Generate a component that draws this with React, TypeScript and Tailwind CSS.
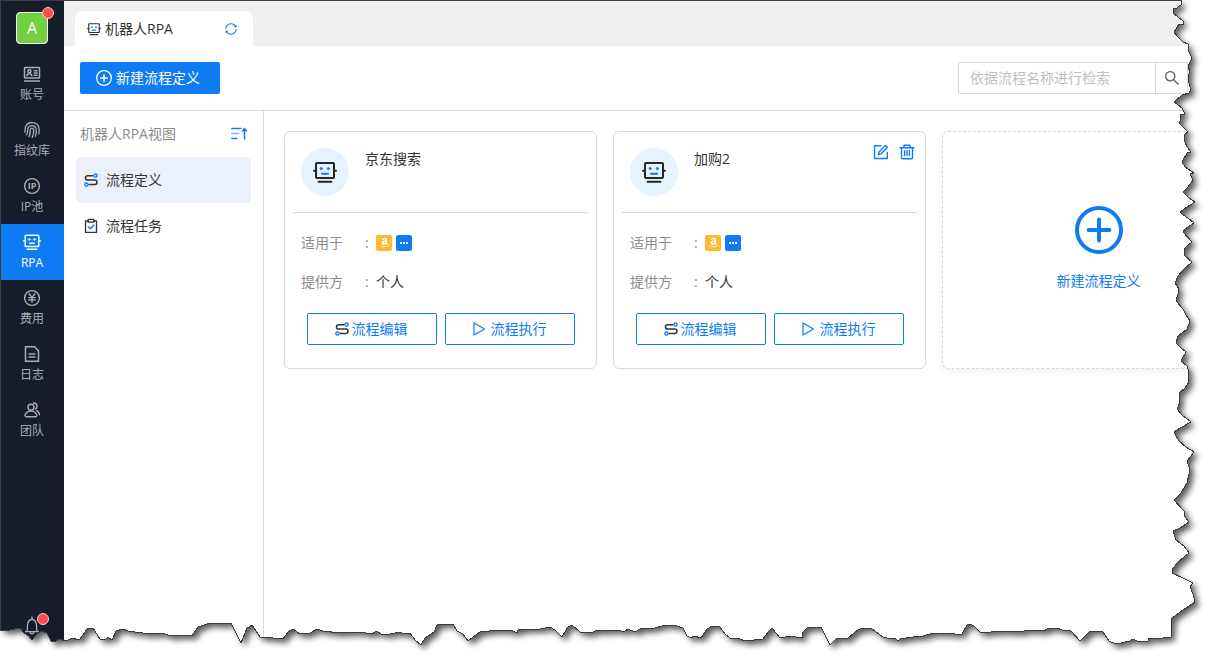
import type { ReactNode } from "react";
import { AiOutlineSearch, AiOutlineSync } from "react-icons/ai";
import { FaAmazon } from "react-icons/fa";

type IconProps = { className?: string };

function Svg({ className = "size-4", box = 16, width = 1.3, children }: { className?: string; box?: number; width?: number; children: ReactNode }) {
  return (
    <svg
      className={className}
      viewBox={`0 0 ${box} ${box}`}
      fill="none"
      stroke="currentColor"
      strokeWidth={width}
      strokeLinecap="round"
      strokeLinejoin="round"
      aria-hidden="true"
    >
      {children}
    </svg>
  );
}

// robot head: dark frame, face in its own colour
function RobotIcon({ className, face = "#0f7cf4" }: IconProps & { face?: string }) {
  return (
    <Svg className={className} box={24} width={2}>
      <rect x="3" y="3" width="18" height="15" rx="1" />
      <path d="M1 10.8h2M21 10.8h2M5.5 21.7h13" />
      <g stroke={face}>
        <path d="M9 13.8h6" />
        <circle cx="8.2" cy="8.6" r="1.1" fill={face} strokeWidth="1" />
        <circle cx="15.3" cy="8.6" r="1.1" fill={face} strokeWidth="1" />
      </g>
    </Svg>
  );
}

function FlowIcon({ className }: IconProps) {
  return (
    <Svg className={className} width={1.5}>
      <path d="M10 3.8H4.6a2.1 2.1 0 0 0 0 4.2h7.2a2.2 2.2 0 0 1 0 4.4H6" stroke="#333" />
      <circle cx="12.5" cy="3.6" r="1.6" stroke="#0f7cf4" strokeWidth="1.3" />
      <circle cx="3.4" cy="12.6" r="1.6" stroke="#0f7cf4" strokeWidth="1.3" />
    </Svg>
  );
}

function TaskIcon({ className }: IconProps) {
  return (
    <Svg className={className}>
      <path d="M5 3H2.5v11.4h11V3H11" stroke="#333" />
      <rect x="5.2" y="1.4" width="5.6" height="2.8" stroke="#333" />
      <path d="M5.3 8.8l2 2 3.6-3.8" stroke="#0f7cf4" strokeWidth="1.5" />
    </Svg>
  );
}

function PlusCircle({ className }: IconProps) {
  return (
    <Svg className={className} box={24} width={2}>
      <circle cx="12" cy="12" r="11" />
      <path d="M12 6.8v10.4M6.8 12h10.4" />
    </Svg>
  );
}

function AccountIcon() {
  return (
    <Svg className="size-[18px]" box={18} width={1.5}>
      <rect x="1.5" y="2.5" width="15" height="10.5" rx="0.6" />
      <path d="M1.5 16h15M11.2 5.7h2.8M11.2 8h2.8M11.2 10.3h2.8" />
      <circle cx="6.4" cy="6.2" r="1.5" />
      <path d="M4 10.8c.2-2.6 4.6-2.6 4.8 0" />
    </Svg>
  );
}

function FingerIcon() {
  return (
    <Svg className="size-[18px]" box={18} width={1.3}>
      <path d="M1.8 11.2C2.6 9.6 1.6 7.8 2.6 5.4 5 .2 13.4.2 15.6 5.600c.8 2.200.6 4.800.2 7.200" />
      <path d="M3.6 13.8c1.7-2.5.6-4.6 1.3-6.6 1.4-3.6 7-3.4 8.1.2.7 2.6.2 5.6-.6 8" />
      <path d="M6 15.6c1.6-2.8 1-4.9 1.3-7 .4-1.9 3-1.8 3.3 0 .3 2.7-.2 5.3-1.4 7.8" />
    </Svg>
  );
}

function IpIcon() {
  return (
    <Svg className="size-[18px]" box={18} width={1.4}>
      <circle cx="9" cy="9" r="7.4" />
      <text x="9" y="12.3" textAnchor="middle" fontSize="9" fontWeight="700" fontFamily="Open Sans, sans-serif" fill="currentColor" stroke="none">
        IP
      </text>
    </Svg>
  );
}

function MoneyIcon() {
  return (
    <Svg className="size-[18px]" box={18} width={1.4}>
      <circle cx="9" cy="9" r="7.4" />
      <path d="M6 4.800l3 3.400 3-3.400M9 8.200v5M5.800 8.600h6.400M5.800 10.900h6.400" />
    </Svg>
  );
}

function LogIcon() {
  return (
    <Svg className="size-[18px]" box={18} width={1.5}>
      <path d="M2.500 1.700h9l4 4v10.600h-13z" />
      <path d="M6 9h6M6 12h6" />
    </Svg>
  );
}

function TeamIcon() {
  return (
    <Svg className="size-[18px]" box={18} width={1.4}>
      <circle cx="8" cy="6.2" r="3" />
      <path d="M3.500 15.800c-1.700 0-2-1.400-1-3 2.300-3.600 8.500-3.600 10.800 0 1 1.600.700 3-1 3z" />
      <path d="M10.500 2c3.800-.200 4.600 4.200 2 6M13.600 9.600c1.800.8 2.800 2.200 2.900 4.200" />
    </Svg>
  );
}

function BellIcon({ className }: IconProps) {
  return (
    <Svg className={className} box={20}>
      <path d="M10 1v2M3.500 15.600h13M5 15.200c.6-1.600.2-4.200.6-6.600.8-6.800 8-6.800 8.800 0 .4 2.400 0 5 .6 6.600M8 16c.4 2.600 3.600 2.600 4 0" />
    </Svg>
  );
}

function EditIcon() {
  return (
    <Svg width={1.4}>
      <path d="M8 1.800H1.500v12.700h12.800V8.400" />
      <path d="M5.600 10.600l.4-2.700 6.400-6.500 2 2-6.500 6.500z" />
    </Svg>
  );
}

function TrashIcon() {
  return (
    <Svg width={1.4}>
      <path d="M1 3.800h14M5 3.500V1.200h6v2.300M2.500 4v9.800c0 .5.3.9.9.9h9.200c.6 0 .9-.4.9-.9V4M5.600 6.700v4.800M8 6.700v4.800M10.400 6.700v4.800" />
    </Svg>
  );
}

const navItems = [
  { label: "账号", icon: <AccountIcon /> },
  { label: "指纹库", icon: <FingerIcon /> },
  { label: "IP池", icon: <IpIcon /> },
  { label: "RPA", icon: <RobotIcon className="size-[18px]" face="#fff" />, active: true },
  { label: "费用", icon: <MoneyIcon /> },
  { label: "日志", icon: <LogIcon /> },
  { label: "团队", icon: <TeamIcon /> },
];

function Sidebar() {
  return (
    <aside className="flex w-16 shrink-0 flex-col bg-[#151c2c] text-[#a9afba]">
      <div className="flex h-14 justify-center pt-3">
        <div className="relative flex size-8 items-center justify-center rounded border border-white bg-[#72d13d] text-base text-white">
          A
          <span className="absolute -top-[6px] -right-[7px] size-3 rounded-full border border-[#ffc9c9] bg-[#ff4d4f]" />
        </div>
      </div>
      <nav>
        {navItems.map((item) => (
          <a
            key={item.label}
            href="#"
            className={
              "flex h-14 flex-col items-center gap-[2px] pt-[9px] text-xs leading-5 " +
              (item.active ? "bg-[#0f7cf4] text-white" : "")
            }
          >
            {item.icon}
            {item.label}
          </a>
        ))}
      </nav>
      <button type="button" aria-label="notifications" className="relative mt-auto mb-8 self-center">
        <BellIcon className="size-5" />
        <span className="absolute -top-[3px] -right-[7px] size-3 rounded-full border border-[#ffc9c9] bg-[#ff4d4f]" />
      </button>
    </aside>
  );
}

function FlowCard({ title, editable }: { title: string; editable?: boolean }) {
  return (
    <article className="w-[313px] shrink-0 rounded-md border border-[#d9d9d9] px-2 pb-[23px]">
      <header className="flex h-[81px] items-start border-b border-[#d9d9d9] pl-2">
        <div className="mt-4 flex size-12 shrink-0 items-center justify-center rounded-full bg-[#e6f2ff] text-[#262626]">
          <RobotIcon className="size-6" />
        </div>
        <h2 className="mt-4 ml-4 leading-[22px]">{title}</h2>
        {editable && (
          <div className="mt-3 mr-[2px] ml-auto flex gap-[10px] text-[#0f7cf4]">
            <button type="button" aria-label="edit">
              <EditIcon />
            </button>
            <button type="button" aria-label="delete">
              <TrashIcon />
            </button>
          </div>
        )}
      </header>
      <dl className="pt-[10px] pb-3 pl-2">
        <div className="flex h-[39px] items-center">
          <dt className="flex text-[#8c8c8c]">
            <span className="w-16">适用于</span>
            <span className="w-[11px]">:</span>
          </dt>
          <dd className="flex gap-1">
            <span className="flex size-4 items-center justify-center rounded-xs bg-[#ffb830] text-white">
              <FaAmazon className="size-[11px]" />
            </span>
            <span className="flex size-4 items-center justify-center gap-px rounded-xs bg-[#0f7cf4]">
              <i className="size-[2px] bg-white" />
              <i className="size-[2px] bg-white" />
              <i className="size-[2px] bg-white" />
            </span>
          </dd>
        </div>
        <div className="flex h-[39px] items-center">
          <dt className="flex text-[#8c8c8c]">
            <span className="w-16">提供方</span>
            <span className="w-[11px]">:</span>
          </dt>
          <dd>个人</dd>
        </div>
      </dl>
      <div className="flex justify-center gap-2 text-[#0f7cf4]">
        <button type="button" className="flex h-8 w-[130px] items-center justify-center gap-[2px] rounded-xs border border-[#0f7cf4] pr-[2px]">
          <FlowIcon className="size-4" />
          流程编辑
        </button>
        <button type="button" className="flex h-8 w-[130px] items-center justify-center gap-1 rounded-xs border border-[#0f7cf4] pr-[2px]">
          <Svg width={1.2}>
            <path d="M3 2v12l10.500-6z" />
          </Svg>
          流程执行
        </button>
      </div>
    </article>
  );
}

// outline of the torn sheet, clockwise from the top left corner
const sheet =
  "M0.5 0.5H1181V5L1177 8L1173 9V13L1178 17L1183 21V24L1179 24L1174 32L1177 36L1183 42L1188 44V50L1192 58L1190 62L1188 67L1190 72L1188 76L1189 83L1191 90L1189 93L1182 95L1174 102L1182 108L1185 114L1180 115L1181 119L1179 123L1183 127L1188 132L1184 135L1185 142L1187 147L1191 152L1187 153L1182 162L1185 167L1194 173L1190 174L1193 180L1188 187L1183 192L1189 198L1195 202L1187 207L1180 212" +
  "L1183 215L1188 218L1194 223L1185 229L1183 232L1192 242L1187 246L1184 250L1185 256L1192 262L1183 270L1178 276L1175 283L1179 289L1178 294L1176 301L1183 309L1186 315L1190 321L1187 329L1178 336L1176 343L1181 348L1186 352L1181 361L1187 366L1189 372L1188 376L1189 382L1185 388L1179 393L1180 402L1177 409L1182 415L1191 422L1180 428L1174 432L1179 441L1186 447L1194 452L1187 461L1190 470L1187 483L1181 493L1174 500L1184 511L1185 517L1189 522L1180 528L1173 531L1176 540L1184 546L1189 553L1178 562L1172 570V573L1183 578L1193 583L1190 587L1193 594L1195 602L1183 610L1172 618L1171 637" +
  "L1155 639L1149 638L1148 641L1137 641L1133 639L1130 641L1116 644L1109 641L1103 632L1099 631L1090 631L1080 641L1071 631L1062 630L1057 628L1047 629L1044 631L1028 630L1020 632L1001 631L981 633L974 626L970 624L967 625L962 634L955 634L945 633L933 633L923 636L913 637L900 639L898 641L896 639L887 638L883 637L871 628L860 629L855 632L847 639L837 638L830 645L821 627L807 628L803 632L802 638L790 636L780 638L772 628L768 632L763 639L745 641L740 639L730 638L726 635L720 627L712 626L707 629L701 638L694 636L691 638L687 636L683 628L677 626L665 625L655 628L640 629L635 632L628 629L624 632L618 630L600 631" +
  "L597 630L591 633L580 632L572 625L568 627L562 637L555 630L550 627L540 629L530 629L518 630L517 633L513 631L498 630L480 632L472 638L468 641L463 634L457 631L453 624L445 624L437 625L434 632L425 638L421 645L415 640L410 633L404 634L400 632L390 634L381 634L377 631L372 634L360 632L351 632L340 633L323 631L317 629L310 633L300 634L293 629L288 632L283 639L273 638L260 637L252 625L247 628L241 643L231 623L220 624L210 623L198 627L192 636L186 635L170 636L163 633L150 634L128 631L123 629L116 631L112 640L108 637L105 640L100 639L93 628L87 629L83 635L79 640L72 638L66 641L59 639L55 642L51 641L47 633L41 631L36 635L32 640L29 636L24 633L20 628L10 630L0.5 630Z";

function TornEdge() {
  return (
    <svg className="pointer-events-none absolute top-0 left-0" width="1218" height="668" viewBox="0 0 1218 668" aria-hidden="true">
      <defs>
        <clipPath id="outside">
          <path clipRule="evenodd" d={"M0 0H1218V668H0Z" + sheet} />
        </clipPath>
        <filter id="soft" x="-5%" y="-5%" width="110%" height="110%">
          <feGaussianBlur stdDeviation="3" />
        </filter>
      </defs>
      <g clipPath="url(#outside)">
        <rect width="1218" height="668" fill="#fff" />
        <path d={sheet} transform="translate(4 4)" fill="#000" opacity="0.65" filter="url(#soft)" />
      </g>
      <path d={sheet} fill="none" stroke="#3c3c3c" shapeRendering="crispEdges" />
    </svg>
  );
}

export default function App() {
  return (
    <div className="relative flex h-screen overflow-hidden bg-white font-['Open_Sans','Noto_Sans_CJK_SC',sans-serif] text-sm text-[#333]">
      <Sidebar />
      <main className="flex min-w-0 flex-1 flex-col">
        <div className="flex h-[46px] shrink-0 items-end bg-[#efeff1] pl-[11px]">
          <div className="flex h-[35px] w-[178px] items-center rounded-t-lg bg-white pr-[15px] pl-3">
            <RobotIcon className="size-[14px]" />
            <h1 className="ml-1">机器人RPA</h1>
            <button type="button" aria-label="refresh" className="ml-auto text-[#0f7cf4]">
              <AiOutlineSync className="size-[14px]" />
            </button>
          </div>
        </div>

        <div className="flex h-[65px] shrink-0 items-center justify-between border-b border-[#d9d9d9] pr-[30px] pl-4">
          <button type="button" className="flex h-8 w-[140px] items-center justify-center gap-1 rounded-xs bg-[#0f7cf4] pr-1 text-white">
            <PlusCircle className="size-4" />
            新建流程定义
          </button>
          <form className="flex h-8 rounded-xs border border-[#d9d9d9]">
            <input
              type="text"
              aria-label="依据流程名称进行检索"
              placeholder="依据流程名称进行检索"
              className="w-[196px] px-[11px] outline-none placeholder:text-[#bfbfbf]"
            />
            <button type="button" aria-label="search" className="flex w-8 items-center justify-center border-l border-[#d9d9d9] text-[#666]">
              <AiOutlineSearch className="size-[18px]" />
            </button>
          </form>
        </div>

        <div className="flex min-h-0 flex-1">
          <section className="w-[200px] shrink-0 border-r border-[#d9d9d9] px-3">
            <div className="flex h-[46px] items-center justify-between px-1 text-[#8c8c8c]">
              机器人RPA视图
              <button type="button" aria-label="sort" className="text-[#0f7cf4]">
                <Svg width={1.5}>
                  <path d="M.8 2.500h9M.8 12.500h5M13.500 13V3.200M11.500 5l2-2.400 2 2.400" />
                  <path d="M.8 7.500h7" opacity="0.5" />
                </Svg>
              </button>
            </div>
            <a href="#" className="flex h-[46px] items-center gap-[7px] rounded-md bg-[#eaf1fa] px-[7px]">
              <FlowIcon className="size-4" />
              流程定义
            </a>
            <a href="#" className="flex h-[46px] items-center gap-[7px] px-[7px]">
              <TaskIcon className="size-4" />
              流程任务
            </a>
          </section>

          <section className="flex min-w-0 flex-1 items-start gap-4 overflow-hidden p-5">
            <FlowCard title="京东搜索" />
            <FlowCard title="加购2" editable />
            <button
              type="button"
              className="flex w-[313px] shrink-0 flex-col items-center justify-center gap-4 rounded-md border border-dashed border-[#d9d9d9] pt-[74px] pb-[76px] leading-[22px] text-[#0f7cf4] shadow-[0_2px_8px_rgba(0,0,0,0.06)]"
            >
              <PlusCircle className="size-12" />
              新建流程定义
            </button>
          </section>
        </div>
      </main>
      <TornEdge />
    </div>
  );
}
